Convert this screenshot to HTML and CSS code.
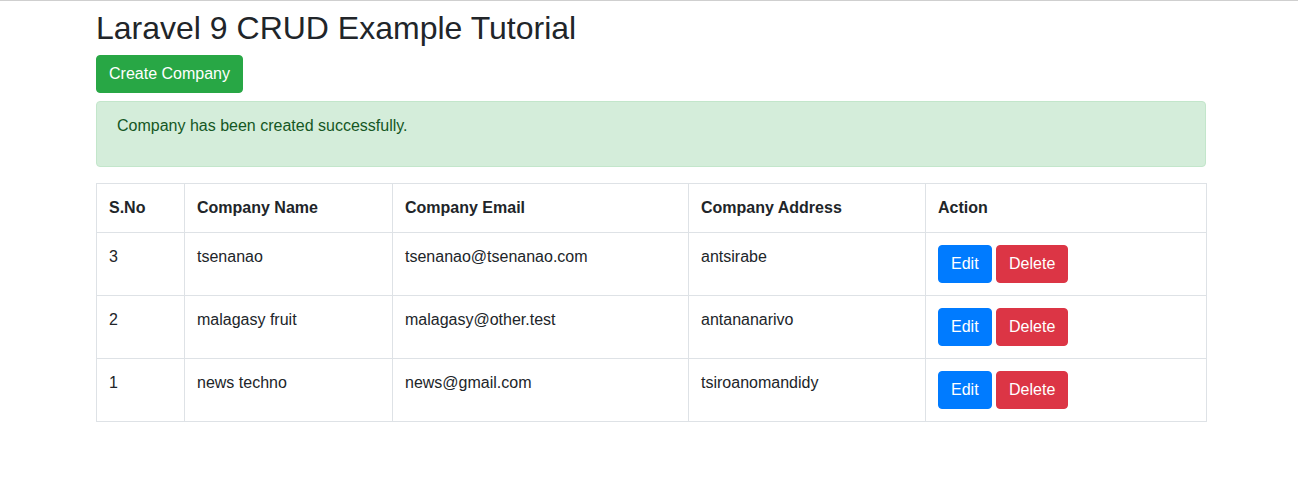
FILE: index.html
```html
<!DOCTYPE html>
<html lang="en">
<head>
<meta charset="utf-8">
<title>Laravel 9 CRUD Example Tutorial</title>
<link rel="stylesheet" href="styles.css">
</head>
<body>
<div class="container">
  <div class="header">
    <h2 class="title">Laravel 9 CRUD Example Tutorial</h2>
    <div class="actions">
      <a class="btn btn-success" href="#">Create Company</a>
    </div>
  </div>
  <div class="alert alert-success">
    <p>Company has been created successfully.</p>
  </div>
  <table class="table">
    <colgroup>
      <col class="c1"><col class="c2"><col class="c3"><col class="c4"><col class="c5">
    </colgroup>
    <thead>
      <tr>
        <th>S.No</th>
        <th>Company Name</th>
        <th>Company Email</th>
        <th>Company Address</th>
        <th>Action</th>
      </tr>
    </thead>
    <tbody>
      <tr>
        <td>3</td>
        <td>tsenanao</td>
        <td>tsenanao@tsenanao.com</td>
        <td>antsirabe</td>
        <td><a class="btn btn-primary" href="#">Edit</a> <button class="btn btn-danger" type="button">Delete</button></td>
      </tr>
      <tr>
        <td>2</td>
        <td>malagasy fruit</td>
        <td>malagasy@other.test</td>
        <td>antananarivo</td>
        <td><a class="btn btn-primary" href="#">Edit</a> <button class="btn btn-danger" type="button">Delete</button></td>
      </tr>
      <tr>
        <td>1</td>
        <td>news techno</td>
        <td>news@gmail.com</td>
        <td>tsiroanomandidy</td>
        <td><a class="btn btn-primary" href="#">Edit</a> <button class="btn btn-danger" type="button">Delete</button></td>
      </tr>
    </tbody>
  </table>
</div>
</body>
</html>
```
FILE: styles.css
```css
* { box-sizing: border-box; }
html, body { margin: 0; }
body {
  border-top: 1px solid #cfcfcf;
  font-family: "Liberation Sans", Arial, Helvetica, sans-serif;
  font-size: 16px;
  line-height: 1.5;
  color: #212529;
  background: #fff;
  padding-left: 4px;
}
.container {
  width: 1110px;
  margin: 8px auto 0;
}
.title {
  margin: 0 0 8px;
  font-size: 32px;
  font-weight: 500;
  line-height: 1.2;
}
.actions { margin-bottom: 8px; }
.btn {
  display: inline-block;
  font-family: inherit;
  font-size: 16px;
  line-height: 24px;
  padding: 6px 12px;
  border: 1px solid transparent;
  border-radius: 4px;
  color: #fff;
  text-decoration: none;
  vertical-align: middle;
  cursor: pointer;
}
.btn-success { background: #28a745; border-color: #28a745; }
.btn-primary { background: #007bff; border-color: #007bff; }
.btn-danger { background: #dc3545; border-color: #dc3545; }
.alert {
  padding: 12px 20px;
  margin-bottom: 16px;
  border: 1px solid #c3e6cb;
  border-radius: 4px;
  background: #d4edda;
  color: #155724;
}
.alert p { margin: 0 0 16px; }
.table {
  width: 1110px;
  border-collapse: collapse;
  table-layout: fixed;
  margin-bottom: 16px;
}
.c1 { width: 88px; }
.c2 { width: 208px; }
.c3 { width: 296px; }
.c4 { width: 237px; }
.c5 { width: 281px; }
.table th, .table td {
  border: 1px solid #dee2e6;
  padding: 12px;
  text-align: left;
  vertical-align: top;
}
.table th { font-weight: 700; }
```
